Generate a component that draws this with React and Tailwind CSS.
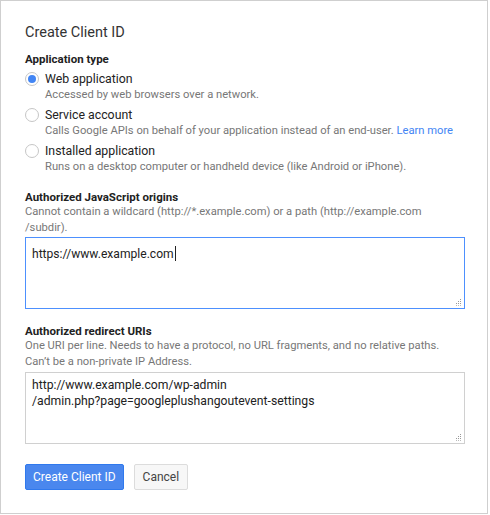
import React from 'react';

const font = { fontFamily: 'Roboto, "Liberation Sans", Arial, sans-serif' };

function Radio({ checked }) {
  return (
    <span className="mt-[1px] flex h-[14px] w-[14px] shrink-0 items-center justify-center rounded-full border border-[#c6c6c6] bg-white">
      {checked && <span className="h-[8px] w-[8px] rounded-full bg-[#4285f4]" />}
    </span>
  );
}

function Option({ checked, label, children }) {
  return (
    <div className="flex gap-[6px]">
      <Radio checked={checked} />
      <div>
        <div className="text-[12.3px] leading-[16px] text-[#222]">{label}</div>
        <div className="text-[11.2px] leading-[16px] text-[#777]">{children}</div>
      </div>
    </div>
  );
}

function Grip() {
  return (
    <svg className="absolute bottom-[2px] right-[2px]" width="7" height="7" viewBox="0 0 7 7">
      <rect x="5" y="0" width="1" height="1" fill="#999" />
      <rect x="3" y="2" width="1" height="1" fill="#999" />
      <rect x="5" y="2" width="1" height="1" fill="#999" />
      <rect x="1" y="4" width="1" height="1" fill="#999" />
      <rect x="3" y="4" width="1" height="1" fill="#999" />
      <rect x="5" y="4" width="1" height="1" fill="#999" />
      <rect x="1" y="6" width="1" height="1" fill="#bbb" />
      <rect x="3" y="6" width="1" height="1" fill="#bbb" />
      <rect x="5" y="6" width="1" height="1" fill="#bbb" />
    </svg>
  );
}

export default function App() {
  return (
    <div className="h-[515px] w-[490px] bg-white" style={font}>
      <div className="h-[514px] w-[488px] border border-[#cfcfcf] bg-white px-[24px] pt-[21px]">
        <h1 className="text-[14.5px] leading-[22px] text-[#333]">Create Client ID</h1>

        <div className="mt-[8px] text-[11.5px] font-bold leading-[14px] text-[#222]">Application type</div>
        <div className="mt-[5px] flex flex-col gap-[4px]">
          <Option checked label="Web application">Accessed by web browsers over a network.</Option>
          <Option label="Service account">
            Calls Google APIs on behalf of your application instead of an end-user.{' '}
            <span className="text-[#4285f4]">Learn more</span>
          </Option>
          <Option label="Installed application">
            Runs on a desktop computer or handheld device (like Android or iPhone).
          </Option>
        </div>

        <div className="mt-[15px] text-[11.5px] font-bold leading-[14px] text-[#222]">Authorized JavaScript origins</div>
        <div className="text-[11.2px] leading-[16px] text-[#777]">
          Cannot contain a wildcard (http://*.example.com) or a path (http://example.com
          <br />
          /subdir).
        </div>
        <div className="relative mt-[1px] h-[72px] w-[440px] border border-[#4d90fe] px-[6px] pt-[5px] text-[12.1px] leading-[16px] text-[#222]">
          https://www.example.com<span className="ml-px inline-block h-[15px] w-px translate-y-[3px] bg-[#222]" />
          <Grip />
        </div>

        <div className="mt-[15px] text-[11.5px] font-bold leading-[14px] text-[#222]">Authorized redirect URIs</div>
        <div className="text-[11.2px] leading-[16px] text-[#777]">
          One URI per line. Needs to have a protocol, no URL fragments, and no relative paths.
          <br />
          Can’t be a non-private IP Address.
        </div>
        <div className="relative mt-[2px] h-[72px] w-[440px] border border-[#d0d0d0] px-[6px] pt-[4px] text-[12.2px] leading-[16px] text-[#222]">
          http://www.example.com/wp-admin
          <br />
          /admin.php?page=googleplushangoutevent-settings
          <Grip />
        </div>

        <div className="mt-[20px] flex gap-[10px]">
          <button className="h-[26px] rounded-[2px] border border-[#3079ed] bg-[#4a87ee] px-[7px] text-[12px] text-white">
            Create Client ID
          </button>
          <button className="h-[26px] rounded-[2px] border border-[#dcdcdc] bg-[#f7f7f7] px-[8px] text-[12px] text-[#444]">
            Cancel
          </button>
        </div>
      </div>
    </div>
  );
}
